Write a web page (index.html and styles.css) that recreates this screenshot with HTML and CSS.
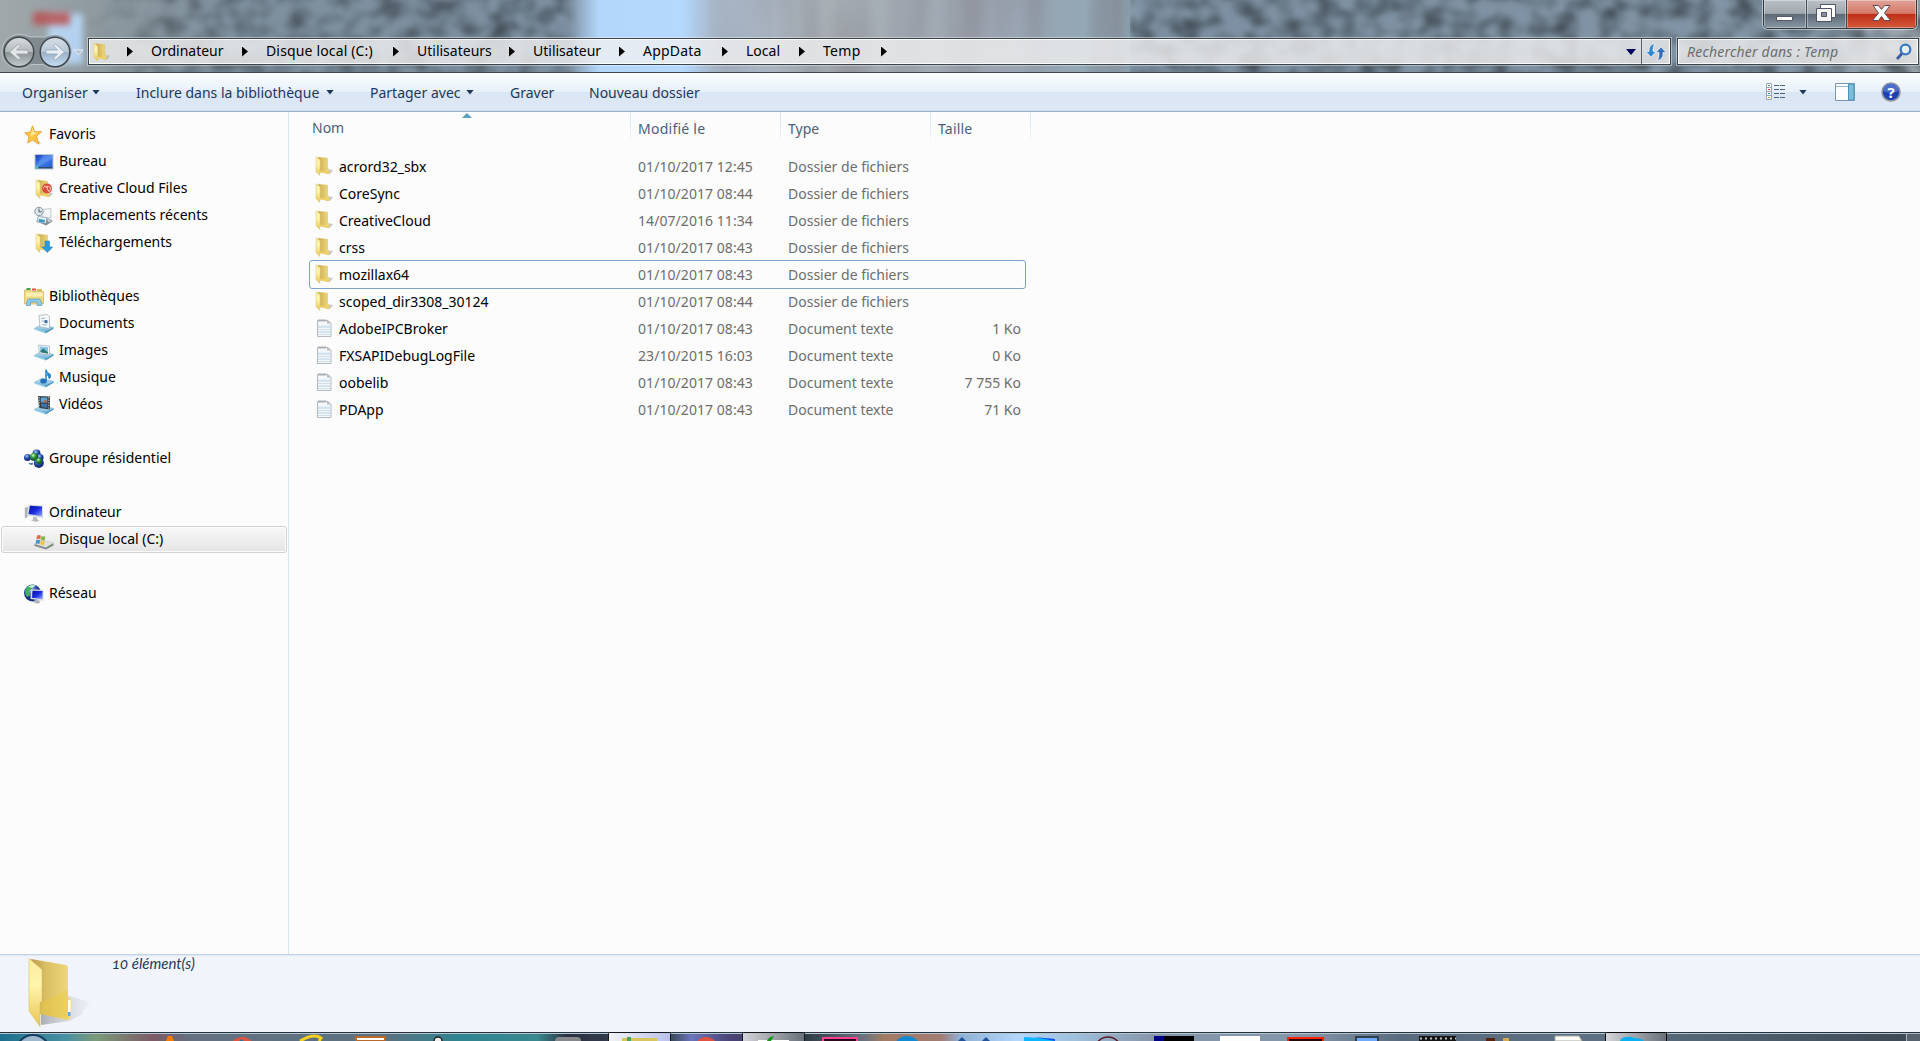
FILE: index.html
```
<!DOCTYPE html>
<html lang="fr">
<head>
    <meta charset="UTF-8">
    <title>Temp</title>
    <link rel="stylesheet" href="styles.css">
</head>
<body>
    <svg class="defs" width="0" height="0">
        <defs>
            <linearGradient id="flap" x1="0" y1="0" x2="0" y2="1"><stop offset="0" stop-color="#f9eda0"/><stop offset=".4" stop-color="#fff5ad"/><stop offset="1" stop-color="#e8c452"/></linearGradient>
            <linearGradient id="inner" x1="0" y1="0" x2="1" y2="0"><stop offset="0" stop-color="#b79b4c"/><stop offset=".35" stop-color="#d9bd62"/><stop offset="1" stop-color="#f1db7f"/></linearGradient>
            <linearGradient id="screen" x1="0" y1="0" x2="1" y2="1"><stop offset="0" stop-color="#1b3fb8"/><stop offset=".5" stop-color="#3f7de8"/><stop offset="1" stop-color="#2a5cd0"/></linearGradient>
            <linearGradient id="navy" x1="0" y1="0" x2="1" y2="1"><stop offset="0" stop-color="#0712a0"/><stop offset=".5" stop-color="#1a2be0"/><stop offset="1" stop-color="#8ea6f5"/></linearGradient>
            <linearGradient id="shade"><stop offset="0" stop-color="#8d9097"/><stop offset="1" stop-color="#d5d8df" stop-opacity=".3"/></linearGradient>
            <radialGradient id="blueball" cx=".4" cy=".3"><stop offset="0" stop-color="#b9d4ff"/><stop offset=".5" stop-color="#4169c0"/><stop offset="1" stop-color="#16307f"/></radialGradient>
            <radialGradient id="greenball" cx=".4" cy=".3"><stop offset="0" stop-color="#d3ffc7"/><stop offset=".5" stop-color="#43ac42"/><stop offset="1" stop-color="#176425"/></radialGradient>
            <linearGradient id="tray" x1="0" y1="0" x2="0" y2="1"><stop offset="0" stop-color="#d3eefa"/><stop offset="1" stop-color="#5ba6d1"/></linearGradient>
        </defs>
        <symbol id="folder" viewBox="0 0 20 20">
            <path d="M12 18l4-4.500 3 .5-2.500 3.500z" fill="#a9a9a9" opacity=".6"/>
            <path d="M4 1.200l9.500 1v10.500l1.500.8v4.300L6 16z" fill="url(#inner)" stroke="#d9bd5c" stroke-width=".5"/>
            <path d="M6 14.500l8.500 1.700v1.500L6 16z" fill="#f2d35f"/>
            <path d="M2 .8l4.200 3v8.700l-.5 7L2 15.500z" fill="url(#flap)" stroke="#dcc36a" stroke-width=".5"/>
        </symbol>
        <symbol id="text" viewBox="0 0 20 20">
            <path d="M3.500 2.500h10.500l3 3v13h-13.500z" fill="#f5f8fa" stroke="#b4babf"/>
            <path d="M4 7.500h12.500v2.500H4zM4 13h12.500v2H4z" fill="#d3e4ee"/>
            <path d="M4 11.500h12.500M4 16.500h12.500" stroke="#c5d5de" stroke-width=".8"/>
            <path d="M5 1v3M7 1v3M9 1v3M11 1v3" stroke="#9b9fa3" stroke-width=".8"/>
            <path d="M13 1.500l4 4h-4z" fill="#b5bbc0"/>
        </symbol>
        <symbol id="star" viewBox="0 0 20 20">
            <path d="M12 18l5 1-2-3z" fill="#ccc"/>
            <path d="M8.500.8l2.200 6 7-.2-5 4.600 2 8-6-4.200-5 3 1.300-6.400L.8 8l5.600-1z" fill="#ffc443" stroke="#e79a28" stroke-width=".8"/>
            <path d="M8.500 2.500l1.600 5 4.500.2-8 3.300z" fill="#ffe79a"/>
        </symbol>
        <symbol id="desktop" viewBox="0 0 20 20">
            <path d="M.5 2h19v15.500H.5z" fill="#bcc8d8"/>
            <path d="M1.500 3h17v12h-17z" fill="url(#screen)"/>
            <path d="M9 3h9.500v4L3 15H1.500z" fill="#8db8ff" opacity=".3"/>
            <path d="M1.500 15h17v1.500h-17z" fill="#2a4a72"/><circle cx="3" cy="15.500" r="1.500" fill="#56c1b2"/>
        </symbol>
        <symbol id="creative" viewBox="0 0 20 20">
            <use href="#folder" width="20" height="20"/>
            <circle cx="13" cy="9.500" r="5" fill="#dd4a38"/>
            <path d="M9.500 9.500a2 2 0 1 1 3.500 1l2.500 2M12 9a2.300 2.300 0 1 1 2 3" fill="none" stroke="#ffd0c8" stroke-width="1"/>
        </symbol>
        <symbol id="recent" viewBox="0 0 20 20">
            <path d="M2 15l5-3 12 3-7 4.500z" fill="#81878c"/>
            <path d="M8 3.500l9-1v9l-9 1z" fill="#f3f6f7" stroke="#a4abaf" stroke-width=".6"/>
            <path d="M4 10.500l9 1-1 6-9-1.500z" fill="#dff0f8" stroke="#7b8b97" stroke-width=".6"/>
            <path d="M5 13l6 1-.5 2.500-6-.8z" fill="#3e93bd"/>
            <path d="M13.500 12.500l4 1v2l-4 1z" fill="#c8cccf" stroke="#8f9498" stroke-width=".5"/>
            <circle cx="5" cy="5.500" r="4.200" fill="#dfe6ec" stroke="#8796a3"/><path d="M5 2.500v3.300h2.800" fill="none" stroke="#51606c"/>
        </symbol>
        <symbol id="downloads" viewBox="0 0 20 20">
            <use href="#folder" width="20" height="20"/>
            <path d="M11 8h4.500v6h3l-5.200 5.500L8 14h3z" fill="#2a9de2" stroke="#1977b9" stroke-width=".5"/>
        </symbol>
        <symbol id="libraries" viewBox="0 0 20 20">
            <path d="M.5 3h6L8 4.500h11.500v12.500H.5z" fill="#f0d884" stroke="#ceb15c" stroke-width=".7"/>
            <path d="M2.500 2h4" stroke="#3ba246" stroke-width="2"/><path d="M8 2.500h4" stroke="#e14e35" stroke-width="2"/>
            <path d="M13 3h5" stroke="#e8b250" stroke-width="2"/>
            <path d="M2 5.500h16.500v4H2z" fill="#fbeeae"/>
            <path d="M2.500 18.500v-3l1.800-3.500h11.400l2 3.500v3h-4.500V15H6.500v3.500z" fill="#8dcbe8" stroke="#549cc4" stroke-width=".7"/>
        </symbol>
        <symbol id="tray-base" viewBox="0 0 20 20">
            <path d="M.5 14.500l7-4 12 3-8 5z" fill="url(#tray)" stroke="#63a8cc" stroke-width=".6"/>
            <path d="M.5 14.500l11 3.500v1.500l-11-3.800z" fill="#9fd3ea"/><path d="M11.500 18l8-4.500v1.300l-8 4.700z" fill="#458fb9"/>
        </symbol>
        <symbol id="documents" viewBox="0 0 20 20">
            <use href="#tray-base" width="20" height="20"/>
            <path d="M5 1.500l8-1 2.500 2v12L6 13z" fill="#f5f9fb" stroke="#9caab4" stroke-width=".7"/>
            <path d="M7 4.500l4-.3M7.500 7l3 .2M8 10.500l5 .5" stroke="#9dbbd0"/><path d="M10.500 6l3 .2v3l-3-.2z" fill="#3e6ea6"/>
        </symbol>
        <symbol id="images" viewBox="0 0 20 20">
            <use href="#tray-base" width="20" height="20"/>
            <path d="M4.500 4l11 1v9l-10-1.500z" fill="#f5f9fb" stroke="#9caab4" stroke-width=".7"/>
            <path d="M6 5.500l8 .7v6l-7.500-1z" fill="#82c2e6"/><path d="M6.500 9.500l3-2 4.500 4v1.200l-7.500-1.500z" fill="#2a7b72"/>
        </symbol>
        <symbol id="music" viewBox="0 0 20 20">
            <use href="#tray-base" width="20" height="20"/>
            <path d="M12 13V1.500q.3 3 3 4.500t0 4.500q.8-3-2-4.200" fill="none" stroke="#2e80c4" stroke-width="1.500"/>
            <ellipse cx="9.500" cy="13" rx="3.300" ry="2.600" fill="#2372ba"/>
        </symbol>
        <symbol id="videos" viewBox="0 0 20 20">
            <use href="#tray-base" width="20" height="20"/>
            <path d="M4 1l12 .5v13L5 13z" fill="#353c42"/><path d="M6.800 2.500h6.500v5H6.800z" fill="#5da6d7"/>
            <path d="M7 8.500l6.300.3v4.200L7.200 12z" fill="#3c73a4"/><path d="M8.500 7.500l3-3 1.800 3z" fill="#b85e36"/>
            <path d="M5.200 2v11M14.800 2v12" stroke="#cbd3d8" stroke-width="1" stroke-dasharray="1.300 1.300"/>
        </symbol>
        <symbol id="homegroup" viewBox="0 0 20 20">
            <circle cx="12.500" cy="4.500" r="4" fill="url(#blueball)"/><circle cx="3.500" cy="8.500" r="3.500" fill="url(#blueball)"/>
            <circle cx="16" cy="8.500" r="3.600" fill="url(#blueball)"/><circle cx="10" cy="8" r="4" fill="url(#greenball)"/>
            <circle cx="14.800" cy="14" r="5" fill="url(#blueball)"/><circle cx="15" cy="12" r="3" fill="url(#greenball)"/>
            <path d="M4 13.500q3 1.500 5 0l-.5 2.500q-3 0-4.500-2.500z" fill="#3866ba"/>
        </symbol>
        <symbol id="computer" viewBox="0 0 20 20">
            <path d="M.8 5l3-1.500v10L2 15H.8z" fill="#aeb3b8"/><path d="M4.500 1.500l14.500 1v12.500L3 12.500z" fill="#d6dade"/>
            <path d="M6 2.800l12 .7v9.700L4.500 11z" fill="url(#navy)"/>
            <path d="M9 13.800l4 .6.500 2.300 2 .8-3.500 1.500-5-1.500 2-1z" fill="#b8bcc0"/>
        </symbol>
        <symbol id="disk" viewBox="0 0 20 20">
            <path d="M.5 14l7-4.500 12 3.500v2.500L12 19.500.5 16z" fill="#858a8c"/>
            <path d="M.5 14l7-4.500 12 3.500-7.500 4.500z" fill="#dde0de"/>
            <path d="M3 5.500q2-1 3.800 0L6.300 9.300q-2-1-3.900 0z" fill="#e8683a"/><path d="M7.400 6q2 1 3.900.3l-.6 3.900q-2 .6-3.900-.4z" fill="#7cb94a"/>
            <path d="M2.200 10q2-.8 3.900.2L5.500 14q-2-1-3.800 0z" fill="#3f93cf"/><path d="M6.700 10.500q2 1 3.900.4l-.5 3.800q-2.200.6-3.900-.4z" fill="#f1c141"/>
            <path d="M13 17.500l4-2.300" stroke="#5da35a"/>
        </symbol>
        <symbol id="network" viewBox="0 0 20 20">
            <circle cx="8.500" cy="9" r="8.500" fill="url(#blueball)"/>
            <path d="M2 4q4-4 8-3l-2 4-3 2 1 4-3 2q-3-4-1-9z" fill="#47b060"/><path d="M4 2.500q4-2.500 8-1L8 4z" fill="#c9f1da"/>
            <path d="M7 5.500l12.500.3v11L6.500 15z" fill="#d6dade"/><path d="M8.500 6.800l10 .2v8l-10.500-1.200z" fill="url(#navy)"/>
            <path d="M11 15.700l4 .5 1.500 2-3 1.500-4-1.500z" fill="#b1b6ba"/>
        </symbol>
    </svg>

    <div class="window">
        <header class="glass">
            <svg class="glass-bg" width="1920" height="73">
                <defs>
                    <filter id="stone" x="0" y="0" width="100%" height="100%" color-interpolation-filters="sRGB">
                        <feTurbulence type="fractalNoise" baseFrequency=".045 .055" numOctaves="2" seed="8"/>
                        <feColorMatrix values="0 0 0 0 .24  0 0 0 0 .28  0 0 0 0 .31  1.900 0 0 0 -.7"/>
                        <feGaussianBlur stdDeviation="2"/>
                    </filter>
                    <filter id="streaks" x="0" y="0" width="100%" height="100%" color-interpolation-filters="sRGB">
                        <feTurbulence type="fractalNoise" baseFrequency=".022 .003" numOctaves="2" seed="4"/>
                        <feColorMatrix values="0 0 0 0 .48  0 0 0 0 .47  0 0 0 0 .5  1.500 0 0 0 -.6"/>
                    </filter>
                    <filter id="soft" x="-50%" y="-50%" width="200%" height="200%"><feGaussianBlur stdDeviation="3"/></filter>
                    <linearGradient id="wall">
                        <stop offset="0" stop-color="#a1a8aa"/><stop offset=".06" stop-color="#8b989f"/><stop offset=".12" stop-color="#7f909e"/>
                        <stop offset=".296" stop-color="#7d90a2"/><stop offset=".312" stop-color="#b3d7fb"/><stop offset=".355" stop-color="#b5d9fd"/>
                        <stop offset=".372" stop-color="#a9b8ca"/><stop offset=".43" stop-color="#aab1b7"/><stop offset=".52" stop-color="#9ba4b1"/>
                        <stop offset=".585" stop-color="#90a9b7"/><stop offset=".595" stop-color="#7d90a2"/><stop offset=".94" stop-color="#8295a6"/><stop offset="1" stop-color="#a1acb4"/>
                    </linearGradient>
                    <linearGradient id="fade"><stop offset="0" stop-color="#fff" stop-opacity="0"/><stop offset=".2" stop-color="#fff" stop-opacity=".8"/><stop offset=".96" stop-color="#fff"/><stop offset="1" stop-color="#fff" stop-opacity="0"/></linearGradient>
                    <mask id="edge"><rect x="80" width="500" height="73" fill="url(#fade)"/></mask>
                    <mask id="edge2"><rect x="690" width="450" height="73" fill="url(#fade)"/></mask>
                </defs>
                <rect width="1920" height="73" fill="url(#wall)"/>
                <g mask="url(#edge)"><rect x="80" y="-10" width="500" height="93" filter="url(#stone)"/></g>
                <g mask="url(#edge2)"><rect x="690" width="450" height="73" filter="url(#streaks)"/></g>
                <rect x="1130" y="-10" width="800" height="93" filter="url(#stone)"/>
                <rect x="48" y="14" width="35" height="50" fill="#b4d2ef" filter="url(#soft)"/>
                <rect x="33" y="12" width="37" height="13" fill="#b95353" opacity=".85" filter="url(#soft)"/>
            </svg>

            <div class="caption">
                <button class="cap cap-min"><svg width="42" height="28"><path d="M12.500 16.500h16v4h-16z" fill="#fff" stroke="#555b68"/></svg></button>
                <button class="cap cap-restore"><svg width="40" height="28"><path d="M13.500 4.500h15v13h-15z" fill="#fff" stroke="#505668"/><path d="M9.500 8.500h15v13h-15z" fill="#f5f5f5" stroke="#505668"/><path d="M14.500 12.500h5v4h-5z" fill="#8b919b" stroke="#505668"/></svg></button>
                <button class="cap cap-close"><svg width="69" height="28"><path d="M26 5.500h5.500l3 4 3-4H43l-5.500 7.500 6 7.500h-6l-3-4-3 4h-6l6-7.500z" fill="#fff" stroke="#5c4c54"/></svg></button>
            </div>

            <div class="navbar">
                <svg class="nav-buttons" width="88" height="40" viewBox="0 0 88 40">
                    <defs><linearGradient id="ball" x1="0" y1="0" x2="0" y2="1"><stop offset="0" stop-color="#d8dcde"/><stop offset=".48" stop-color="#b5babd"/><stop offset=".52" stop-color="#8c9397"/><stop offset="1" stop-color="#c7ced2"/></linearGradient>
                    <linearGradient id="ball2" x1="0" y1="0" x2="0" y2="1"><stop offset="0" stop-color="#d5dde4"/><stop offset=".48" stop-color="#b9cada"/><stop offset=".52" stop-color="#9bb1c6"/><stop offset="1" stop-color="#c5dff5"/></linearGradient></defs>
                    <path d="M19 .5q6 0 11 2.500h14q5-2.500 11-2.500a17 17 0 0 1 0 34q-7 0-12-4H31q-5 4-12 4a17 17 0 0 1 0-34z" fill="#59646c" fill-opacity=".4" stroke="#dde3e6" stroke-opacity=".6"/>
                    <circle cx="19" cy="18" r="14.800" fill="url(#ball)" stroke="#43484c" stroke-width="1.500"/>
                    <circle cx="55" cy="18" r="14.800" fill="url(#ball2)" stroke="#43484c" stroke-width="1.500"/>
                    <path d="M9.500 18l9-8 2 2-4 4H28v4H16.500l4 4-2 2z" fill="#e3e4e5" stroke="#9a9fa3" stroke-width=".8"/>
                    <path d="M64.500 18l-9-8-2 2 4 4H46v4h11.500l-4 4 2 2z" fill="#e7eef5" stroke="#93a3b3" stroke-width=".8"/>
                    <path d="M74 16h9l-4.500 5z" fill="#b4c5d6" stroke="#e5ecf2"/>
                </svg>
                <div class="address">
                    <svg class="address-icon" width="19" height="20"><use href="#folder"/></svg>
                    <i class="sep"></i><span class="c1">Ordinateur</span>
                    <i class="sep"></i><span class="c2">Disque local (C:)</span>
                    <i class="sep"></i><span class="c3">Utilisateurs</span>
                    <i class="sep"></i><span class="c4">Utilisateur</span>
                    <i class="sep"></i><span class="c5">AppData</span>
                    <i class="sep"></i><span class="c6">Local</span>
                    <i class="sep"></i><span class="c7">Temp</span>
                    <i class="sep"></i>
                    <svg class="drop" width="10" height="6"><path d="M0 0h10L5 6z" fill="#00005c"/></svg>
                    <div class="refresh"><svg width="20" height="20" viewBox="0 0 20 20"><path d="M9 1.500Q6.500 4 7 9.500h3L5 15 0 9.500h3Q2.500 2.500 9 1.500z" fill="#2e88d0" stroke="#fff" stroke-width=".6"/><path d="M11 18.500q2.500-2 2-8h-3l5-5.500 5 5.500h-3q.8 7-6 8z" fill="#3470b8" stroke="#fff" stroke-width=".6"/></svg></div>
                </div>
                <div class="search">
                    <span>Rechercher dans : Temp</span>
                    <svg width="18" height="18" viewBox="0 0 18 18"><circle cx="10.500" cy="6.500" r="4.800" fill="#e7eef6" stroke="#3b79bd" stroke-width="2.300"/><path d="M7 10.500l-5 5.500" stroke="#3d5ba0" stroke-width="2.800"/></svg>
                </div>
            </div>
        </header>

        <div class="toolbar">
            <span class="t1">Organiser</span><i class="down"></i>
            <span class="t2">Inclure dans la bibliothèque</span><i class="down"></i>
            <span class="t3">Partager avec</span><i class="down"></i>
            <span class="t4">Graver</span>
            <span class="t5">Nouveau dossier</span>
            <div class="tools">
                <svg width="20" height="18"><path d="M.5.500h5v16h-5zM.5 4.500h5M.5 8.500h5M.5 12.500h5" fill="#fff" stroke="#98a5b6"/><path d="M2 2.500h2" stroke="#58a05c"/><path d="M2 6.500h2" stroke="#d33"/><path d="M2 10.500h2" stroke="#3d8ac6"/><path d="M2 14.500h2" stroke="#a3b521"/><path d="M8 2.500h5M14 2.500h5M8 6.500h5M14 6.500h5M8 10.500h5M14 10.500h5M8 14.500h5M14 14.500h5" stroke="#51647e"/></svg>
                <i class="down"></i>
                <svg class="preview" width="20" height="18"><path d="M.5.500h19v17H.5z" fill="#fcfdfe" stroke="#7d95b5"/><path d="M1 3.500h13" stroke="#9fb4cc"/><path d="M13.500 1h5.500v16h-5.500z" fill="#79bfdb" stroke="#4d93b8"/></svg>
                <svg class="help" width="20" height="20"><circle cx="10" cy="10" r="9" fill="#1d41b2" stroke="#92979f" stroke-width="1.600"/><path d="M2 9a8 7.500 0 0 1 16 0q-8 3-16 0z" fill="#6e8fe2" opacity=".55"/><text x="10" y="15.500" text-anchor="middle">?</text></svg>
            </div>
        </div>

        <main class="main">
            <nav class="sidebar">
                <div class="item root"><svg><use href="#star"/></svg><span>Favoris</span></div>
                <div class="item"><svg><use href="#desktop"/></svg><span>Bureau</span></div>
                <div class="item"><svg><use href="#creative"/></svg><span>Creative Cloud Files</span></div>
                <div class="item"><svg><use href="#recent"/></svg><span>Emplacements récents</span></div>
                <div class="item"><svg><use href="#downloads"/></svg><span>Téléchargements</span></div>

                <div class="item root group"><svg><use href="#libraries"/></svg><span>Bibliothèques</span></div>
                <div class="item"><svg><use href="#documents"/></svg><span>Documents</span></div>
                <div class="item"><svg><use href="#images"/></svg><span>Images</span></div>
                <div class="item"><svg><use href="#music"/></svg><span>Musique</span></div>
                <div class="item"><svg><use href="#videos"/></svg><span>Vidéos</span></div>

                <div class="item root group"><svg><use href="#homegroup"/></svg><span>Groupe résidentiel</span></div>

                <div class="item root group"><svg><use href="#computer"/></svg><span>Ordinateur</span></div>
                <div class="item selected"><svg><use href="#disk"/></svg><span>Disque local (C:)</span></div>

                <div class="item root group"><svg><use href="#network"/></svg><span>Réseau</span></div>
            </nav>

            <section class="files">
                <div class="row head">
                    <span class="name">Nom</span><span class="date">Modifié le</span><span class="type">Type</span><span class="size">Taille</span>
                    <svg class="sort" width="10" height="5"><path d="M0 5l5-5 5 5z" fill="#5b9fbd"/></svg>
                </div>
                <div class="row"><span class="name"><svg><use href="#folder"/></svg>acrord32_sbx</span><span class="date">01/10/2017 12:45</span><span class="type">Dossier de fichiers</span><span class="size"></span></div>
                <div class="row"><span class="name"><svg><use href="#folder"/></svg>CoreSync</span><span class="date">01/10/2017 08:44</span><span class="type">Dossier de fichiers</span><span class="size"></span></div>
                <div class="row"><span class="name"><svg><use href="#folder"/></svg>CreativeCloud</span><span class="date">14/07/2016 11:34</span><span class="type">Dossier de fichiers</span><span class="size"></span></div>
                <div class="row"><span class="name"><svg><use href="#folder"/></svg>crss</span><span class="date">01/10/2017 08:43</span><span class="type">Dossier de fichiers</span><span class="size"></span></div>
                <div class="row focused"><span class="name"><svg><use href="#folder"/></svg>mozillax64</span><span class="date">01/10/2017 08:43</span><span class="type">Dossier de fichiers</span><span class="size"></span></div>
                <div class="row"><span class="name"><svg><use href="#folder"/></svg>scoped_dir3308_30124</span><span class="date">01/10/2017 08:44</span><span class="type">Dossier de fichiers</span><span class="size"></span></div>
                <div class="row"><span class="name"><svg><use href="#text"/></svg>AdobeIPCBroker</span><span class="date">01/10/2017 08:43</span><span class="type">Document texte</span><span class="size">1 Ko</span></div>
                <div class="row"><span class="name"><svg><use href="#text"/></svg>FXSAPIDebugLogFile</span><span class="date">23/10/2015 16:03</span><span class="type">Document texte</span><span class="size">0 Ko</span></div>
                <div class="row"><span class="name"><svg><use href="#text"/></svg>oobelib</span><span class="date">01/10/2017 08:43</span><span class="type">Document texte</span><span class="size">7 755 Ko</span></div>
                <div class="row"><span class="name"><svg><use href="#text"/></svg>PDApp</span><span class="date">01/10/2017 08:43</span><span class="type">Document texte</span><span class="size">71 Ko</span></div>
            </section>
        </main>

        <footer class="details">
            <svg width="64" height="70" viewBox="0 0 64 70">
                <path d="M42 38l21 6-8 10 1 2-14 7-28 4V52z" fill="url(#shade)" opacity=".7"/>
                <path d="M4 1l35 6q2 1 2 3v29l3 2v19l-4 2L13 56z" fill="url(#inner)"/>
                <path d="M14 44l27-12v29L13 56z" fill="#e9c940" opacity=".45"/>
                <path d="M41 42h2.500v16H41z" fill="#fff"/><path d="M41 54h2.500v4H41z" fill="#5aa9ea"/>
                <path d="M2 .5l13 11v32l-2 1v24L2 53z" fill="url(#flap)" stroke="#d8c16c" stroke-width=".6"/>
            </svg>
            <span>10 élément(s)</span>
        </footer>

        <div class="taskbar">
            <svg width="1920" height="9">
                <defs>
                    <linearGradient id="bar">
                        <stop offset="0" stop-color="#1d6f8e"/><stop offset=".035" stop-color="#4a91a2"/><stop offset=".05" stop-color="#7b9a78"/><stop offset=".08" stop-color="#7d5a66"/>
                        <stop offset=".1" stop-color="#647180"/><stop offset=".2" stop-color="#5b7180"/><stop offset=".24" stop-color="#2f8590"/><stop offset=".28" stop-color="#3a8890"/><stop offset=".295" stop-color="#2c3140"/>
                        <stop offset=".35" stop-color="#3d4a5e"/><stop offset=".36" stop-color="#6c75bd"/><stop offset=".38" stop-color="#4b4476"/><stop offset=".42" stop-color="#323c46"/>
                        <stop offset=".45" stop-color="#69737e"/><stop offset=".46" stop-color="#a17b64"/><stop offset=".49" stop-color="#a27b72"/><stop offset=".5" stop-color="#8fb0d5"/>
                        <stop offset=".53" stop-color="#b3d7fb"/><stop offset=".56" stop-color="#9fc0dc"/><stop offset=".6" stop-color="#8796ab"/><stop offset=".68" stop-color="#8496a8"/>
                        <stop offset=".73" stop-color="#586a7b"/><stop offset=".83" stop-color="#5e7182"/><stop offset="1" stop-color="#3c4954"/>
                    </linearGradient>
                    <linearGradient id="pale"><stop offset="0" stop-color="#f2f3f5"/><stop offset="1" stop-color="#b9c0ea"/></linearGradient>
                    <linearGradient id="grey"><stop offset="0" stop-color="#d5d5d8"/><stop offset="1" stop-color="#68707a"/></linearGradient>
                </defs>
                <rect width="1920" height="9" fill="url(#bar)"/>
                <rect width="1920" height="1" fill="#26313a"/><rect y="1" width="1920" height="1" fill="#b3c5d3"/>
                <circle cx="33" cy="20" r="17" fill="#9db8cc" stroke="#173e63" stroke-width="2"/>
                <path d="M168 4h4l2 5h-8z" fill="#f57c00"/>
                <circle cx="242" cy="18" r="13" fill="#e05540"/><path d="M240 7l4 2h-4z" fill="#2476a2"/>
                <path d="M300 9q14-8 21-3l-2 3" fill="none" stroke="#f4cf1e" stroke-width="3"/>
                <path d="M355 4h31v5h-31z" fill="#b9692b"/><path d="M357 6h27v2h-27z" fill="#fff"/>
                <circle cx="438" cy="9" r="4" fill="#eee" stroke="#222" stroke-width="1.500"/>
                <rect x="555" y="5" width="26" height="8" rx="4" fill="#84878b"/>
                <rect x="608.500" y=".5" width="62" height="12" rx="1" fill="url(#pale)" stroke="#15191d"/><path d="M622 6h35v3h-35z" fill="#d8c560"/><path d="M627 5h4v4h-4z" fill="#4da35e"/>
                <circle cx="706" cy="17" r="12" fill="#e15041"/>
                <rect x="742.500" y=".5" width="62" height="12" rx="1" fill="url(#grey)" stroke="#15191d"/><path d="M758 8h31v1h-31z" fill="#fff"/><path d="M767 9q1-4 7-5l-3 5z" fill="#18951d"/>
                <path d="M822 5h36v4h-36z" fill="#ff3f94"/><path d="M824 7h32v2h-32z" fill="#2b0717"/>
                <circle cx="907" cy="18" r="14" fill="#118ad2"/>
                <path d="M958 9l4-4 4 4zM982 9l4-4 4 4z" fill="#23529b"/>
                <path d="M1024 5l31 2v2h-31z" fill="#0bb5ff"/><path d="M1034 5l21 2v2z" fill="#1450f0"/>
                <circle cx="1108" cy="18" r="13" fill="none" stroke="#5b1b26" stroke-width="1.500"/>
                <path d="M1154 4h40v5h-40z"/><path d="M1154 4h10v5h-10z" fill="#00008a"/>
                <path d="M1220 4h40v5h-40z" fill="#fbfcfb"/>
                <path d="M1287 5h37v4h-37z" fill="#fb220c"/><path d="M1289 7h33v2h-33z" fill="#260806"/>
                <path d="M1355 4h24v5h-24z" fill="#31404e"/><path d="M1357 6h20v3h-20z" fill="#6faafa"/>
                <path d="M1419 4h37v5h-37z" fill="#151515"/><path d="M1420 6.500h36" stroke="#b7bbbe" stroke-width="2" stroke-dasharray="2 3"/>
                <path d="M1486 6h9v3h-9z" fill="#57240d"/><path d="M1503 6h6v3h-6z" fill="#d5a955"/>
                <path d="M1555 4h24l3 5h-27z" fill="#fcfcf5" stroke="#a9aca5"/>
                <rect x="1605.500" y=".5" width="61" height="12" rx="1" fill="url(#grey)" stroke="#0b0e10"/><path d="M1620 9q1-4 7-4 4-1 7 1 7 0 10 3z" fill="#09b0f2"/>
                <rect x="1906.500" y="1.500" width="14" height="10" fill="#56636e" stroke="#aab5bd"/>
            </svg>
        </div>
    </div>
</body>
</html>
```
FILE: styles.css
```
* { margin: 0; padding: 0; box-sizing: border-box; }

body {
    font-family: "Noto Sans", "Open Sans", sans-serif;
    font-size: 14px;
    font-stretch: 87%;
    background: #fcfcfc;
    color: #000;
    overflow: hidden;
}

svg { display: block; flex: none; }
span { white-space: nowrap; }
.defs { position: absolute; }

.window {
    display: flex;
    flex-direction: column;
    width: 1920px;
    height: 1041px;
}

/* Aero frame */
.glass {
    position: relative;
    height: 73px;
    flex: none;
    border-bottom: 1px solid #3c4650;
    overflow: hidden;
}

.glass-bg { position: absolute; top: 0; left: 0; }

.caption {
    position: absolute;
    top: -1px;
    right: 3px;
    display: flex;
    border: 1px solid #2f373f;
    border-radius: 0 0 5px 5px;
    box-shadow: 0 0 0 1px rgba(255, 255, 255, 0.5);
    overflow: hidden;
}

.cap {
    height: 28px;
    border: 0;
    border-right: 1px solid #434b54;
    box-shadow: inset 0 0 0 1px rgba(255, 255, 255, 0.35);
    background: linear-gradient(#b9bfc5, #a0a8af 48%, #5d6974 50%, #8797a4);
}

.cap-min { width: 43px; }
.cap-restore { width: 40px; }
.cap-close {
    width: 69px;
    border: 0;
    background: linear-gradient(#dfa398, #d67866 48%, #bd2e14 50%, #d5593b);
}

.navbar {
    position: relative;
    display: flex;
    align-items: flex-start;
    padding-top: 34px;
}

.address, .search {
    display: flex;
    align-items: center;
    height: 27px;
    margin-top: 4px;
    border: 1px solid #3a424a;
    box-shadow: inset 0 0 0 1px rgba(255, 255, 255, 0.85), 0 0 0 1px rgba(255, 255, 255, 0.4);
    background: rgba(240, 240, 240, 0.8);
}

.address { width: 1583px; padding-left: 3px; }
.address-icon { margin-right: 16px; }

.sep {
    width: 6px;
    height: 10px;
    flex: none;
    background: #000;
    clip-path: polygon(0 0, 100% 50%, 0 100%);
}

.address span { margin: 0 15px 2px 18px; }

.c1 { width: 76px; }
.c2 { width: 112px; letter-spacing: 0.15px; }
.c3 { width: 77px; }
.c4 { width: 71px; }
.c5 { width: 64px; letter-spacing: 0.2px; }
.c6 { width: 38px; }
.c7 { width: 43px; letter-spacing: 0.3px; }

.drop { margin-left: auto; margin-right: 5px; }

.refresh {
    display: flex;
    align-items: center;
    justify-content: center;
    width: 29px;
    height: 25px;
    border-left: 1px solid #5a626a;
}

.search {
    width: 242px;
    margin-left: 6px;
    padding: 0 5px 0 9px;
    justify-content: space-between;
    font-style: italic;
    letter-spacing: 0.2px;
    color: #6d6d6d;
}

/* Command bar */
.toolbar {
    display: flex;
    align-items: center;
    height: 39px;
    flex: none;
    padding: 0 19px 0 22px;
    border-bottom: 1px solid #a0b1c8;
    box-shadow: inset 0 -1px #c9dcec;
    background: linear-gradient(#fdfeff, #e6f0fa 49%, #dbe6f4 50%, #dde7f5);
    color: #1e395b;
}

.t1 { width: 70px; }
.t2 { width: 190px; }
.t3 { width: 96px; }
.t4 { width: 79px; }

.down {
    width: 8px;
    height: 5px;
    margin-right: 36px;
    flex: none;
    background: #1e395b;
    clip-path: polygon(0 0, 100% 0, 50% 100%);
}

.tools { display: flex; align-items: center; margin-left: auto; }
.tools .down { margin: 0 28px 0 13px; }
.help { margin-left: 26px; }
.help text { font: bold 15px "Noto Sans", sans-serif; fill: #fff; }

/* Navigation pane and file list */
.main { display: flex; flex: 1; }

.sidebar {
    width: 289px;
    padding: 9px 1px 0;
    border-right: 1px solid #d6e5f5;
}

.item {
    display: flex;
    align-items: center;
    height: 27px;
    padding-left: 33px;
}

.item svg { width: 20px; height: 20px; margin-right: 5px; }
.item span { margin-top: -2px; }
.item.root { padding-left: 23px; }
.item.group { margin-top: 27px; }

.item.selected {
    padding-left: 32px;
    border: 1px solid #d2d2d2;
    border-radius: 3px;
    box-shadow: inset 0 0 0 1px #fafafa;
    background: linear-gradient(#f8f8f8, #e4e4e4);
}

.files { flex: 1; padding-left: 21px; }

.row {
    display: flex;
    align-items: center;
    width: 715px;
    height: 27px;
    color: #6d6d6d;
}

.row > span { flex: none; }
.name { display: flex; align-items: center; width: 328px; padding-left: 4px; color: #000; }
.name svg { width: 20px; height: 20px; margin: -2px 5px 0 0; }
.date { width: 150px; letter-spacing: 0.06px; }
.type { width: 150px; }
.size { width: 83px; text-align: right; }

.row.head {
    position: relative;
    width: 721px;
    height: 30px;
    margin-bottom: 11px;
    color: #4c607a;
}

.head .name { width: 321px; padding-left: 2px; color: inherit; }
.head .date, .head .type, .head .size { padding-left: 7px; text-align: left; }
.head .date { letter-spacing: 0.25px; }
.head .size { width: 100px; letter-spacing: 0.2px; }
.head span {
    height: 30px;
    line-height: 33px;
    border-right: 1px solid;
    border-image: linear-gradient(#d5e4f3, #e3edf7 60%, #fcfcfc) 1;
}

.sort { position: absolute; left: 152px; top: 1px; }

.row.focused {
    outline: 1px solid #7da2ce;
    border-radius: 2px;
}

/* Details pane */
.details {
    display: flex;
    align-items: flex-start;
    height: 78px;
    flex: none;
    padding: 3px 0 0 27px;
    border-top: 1px solid #c4d3e6;
    box-shadow: inset 0 1px #dde8f4;
    background: #f1f4fb;
}

.details span {
    margin: -3px 0 0 21px;
    font-family: Lato, sans-serif;
    font-size: 15px;
    font-style: italic;
    font-variant-numeric: oldstyle-nums;
    line-height: 17px;
    color: #1e395b;
}

.taskbar { height: 9px; flex: none; overflow: hidden; }
```
